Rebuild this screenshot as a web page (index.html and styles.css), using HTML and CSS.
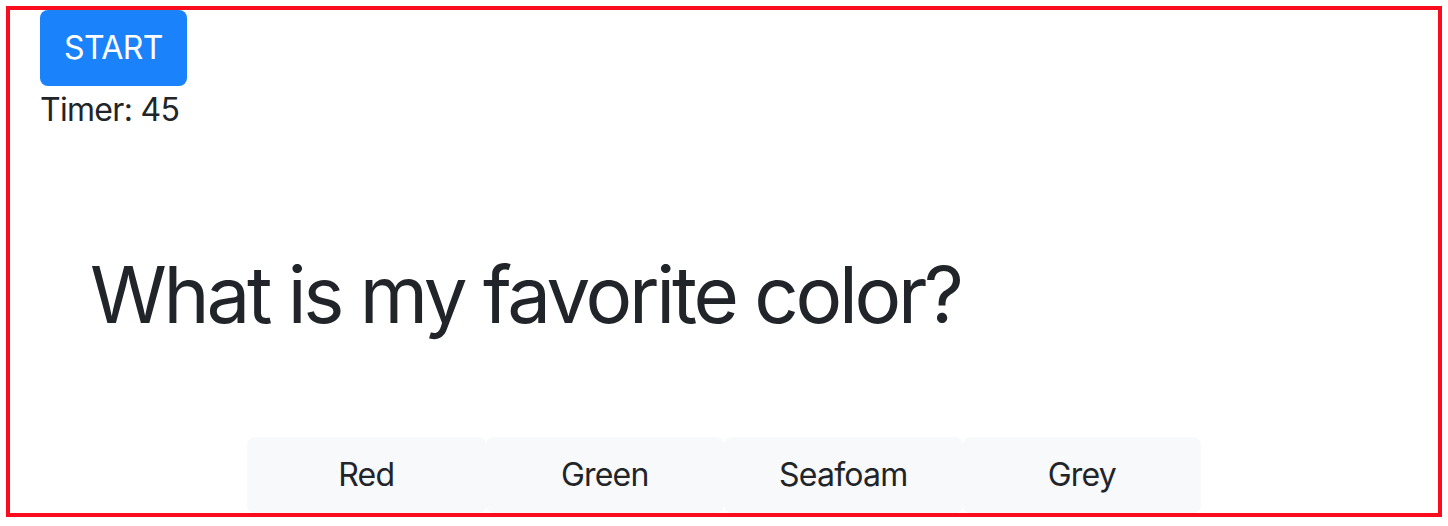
FILE: index.html
```html
<!DOCTYPE html>
<html lang="en">
<head>
<meta charset="utf-8">
<title>Quiz</title>
<link rel="stylesheet" href="styles.css">
</head>
<body>
<div class="frame">
  <div class="top">
    <button class="btn btn-primary">START</button>
    <div class="timer">Timer: 45</div>
  </div>
  <h1 class="question">What is my favorite color?</h1>
  <div class="answers">
    <button class="btn btn-light answer">Red</button>
    <button class="btn btn-light answer">Green</button>
    <button class="btn btn-light answer">Seafoam</button>
    <button class="btn btn-light answer">Grey</button>
  </div>
</div>
</body>
</html>
```

FILE: styles.css
```css
html, body {
  margin: 0;
  padding: 0;
  background: #ffffff;
}
body {
  font-family: Inter, "Noto Sans", "Liberation Sans", sans-serif;
  color: #212529;
}
.frame {
  margin: 6px;
  height: 503px;
  border: 4px solid #fb0b1e;
  padding: 0 30px;
  overflow: hidden;
  box-sizing: content-box;
}
.top {
  display: flex;
  flex-direction: column;
  align-items: flex-start;
}
.btn {
  font-family: inherit;
  font-size: 32px;
  line-height: 48px;
  letter-spacing: -0.6px;
  padding: 14px 24px;
  border: 0;
  border-radius: 8px;
  cursor: pointer;
}
.btn-primary {
  background: #1a82fb;
  color: #ffffff;
}
.timer {
  font-size: 32px;
  line-height: 48px;
  letter-spacing: -0.7px;
}
.question {
  margin: 113px 0 0 50px;
  font-size: 78px;
  font-weight: 400;
  line-height: 96px;
  letter-spacing: -3.3px;
}
.answers {
  display: flex;
  width: 954px;
  margin: 94px auto 0;
}
.btn-light {
  background: #f8f9fa;
  color: #212529;
}
.answer {
  flex: 1 1 0;
  padding: 14px 12px;
  letter-spacing: -0.8px;
}
```
